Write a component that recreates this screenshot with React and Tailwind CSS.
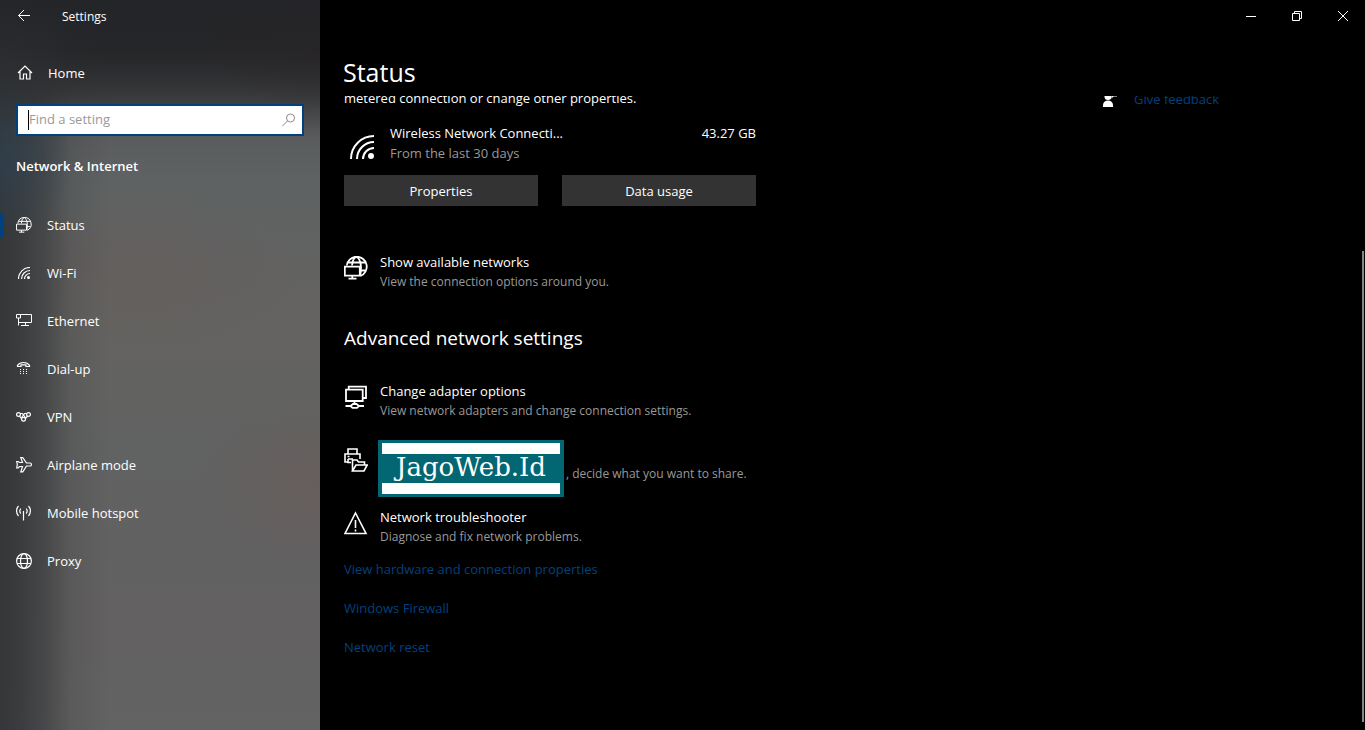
import React, { useState } from 'react';

const Icon = ({ size = 'w-4 h-4', box = 16, stroke = 1, children }) => (
  <svg
    className={`${size} shrink-0`}
    viewBox={`0 0 ${box} ${box}`}
    fill="none"
    stroke="currentColor"
    strokeWidth={stroke}
    aria-hidden="true"
  >
    {children}
  </svg>
);

// Globe with a monitor in front, used small in the nav and large in the page
const StatusIcon = ({ size, stroke = 1.5 }) => (
  <Icon size={size} box={24} stroke={stroke}>
    <path d="M2.800 9.500A10 10 0 1 1 16.500 20" />
    <path d="M8 9.500C8.600 4.500 10.400 1 12.400 1s4.400 4.500 4.600 10c0 3-.1 5-.7 8.500" />
    <path d="M3.800 6.500h17.200M16.500 14.500h5.200" />
    <path d="M.8 10.700h15v9H.8z" />
    <path d="M8.300 19.700v3M4.500 22.700h8" />
  </Icon>
);

const WifiIcon = ({ size, stroke = 2 }) => (
  <Icon size={size} box={24} stroke={stroke}>
    <path d="M1 24A23 23 0 0 1 24 1M7 24A17 17 0 0 1 24 7M13 24A11 11 0 0 1 24 13" />
    <circle cx="21" cy="21" r="3" fill="currentColor" stroke="none" />
  </Icon>
);

const EthernetIcon = () => (
  <Icon>
    <path d="M4.500 1.500h11v8h-13M.5 1.500h4v3.500h-4zM2.500 5v7.500M9.500 9.500v3M5 12.500h8" />
  </Icon>
);

const DialUpIcon = () => (
  <Icon>
    <path
      strokeWidth="1.2"
      d="M1.500 5.500V4.300C3 2.200 5.200 1.500 7.500 1.500s4.500.7 6 2.800v1.200h-3.500V3.900H5v1.600z"
    />
    <path d="M4 8.500h1M7 8.500h1M10 8.500h1M4 10.500h1M7 10.500h1M10 10.500h1M4 12.500h1M7 12.500h1M10 12.500h1" />
  </Icon>
);

const VpnIcon = () => (
  <Icon stroke={1.2}>
    <circle cx="2.500" cy="5.500" r="1.900" />
    <circle cx="12.500" cy="5.500" r="1.900" />
    <circle cx="7.500" cy="10.300" r="1.900" />
    <path d="M4.400 4.500h2l3 4M3.500 7.200l2 2.300M10.600 4.500h-2l-3 4M11.500 7.200l-2 2.300" />
  </Icon>
);

const AirplaneIcon = () => (
  <Icon stroke={1.2}>
    <path d="M6.500 5.500L4.800.7h2L10.500 6h3.800c1.500 0 1.500 3 0 3h-3.800L6.800 14.800h-2L6.500 9.500H3.500L2.200 11H.7l.6-3.500L.7 4.500h1.500l1.300 1z" />
  </Icon>
);

const HotspotIcon = () => (
  <Icon stroke={1.2}>
    <path d="M7.500 6v9.500M4.800 3.500a4 4 0 0 0 0 5M10.200 3.500a4 4 0 0 1 0 5M2.500 1a7.500 7.500 0 0 0 0 10M12.500 1a7.500 7.500 0 0 1 0 10" />
  </Icon>
);

const ProxyIcon = () => (
  <Icon stroke={1.2}>
    <circle cx="8" cy="8" r="7.400" />
    <ellipse cx="8" cy="8" rx="3.500" ry="7.400" />
    <path d="M1.300 5.500h13.400M1.300 10.500h13.400" />
  </Icon>
);

const AdapterIcon = () => (
  <Icon size="w-6 h-6" box={24} stroke={1.8}>
    <path d="M4.700 5V1.700H22V13h-3.500" />
    <path d="M2 4.700h16.700V16H2zM10.500 16v3M1.500 21h5.500M14.500 21h5.500" />
    <path d="M6.500 21l2.500-2h3.500l2.500 2-2 1.800H8.500z" />
  </Icon>
);

const SharingIcon = () => (
  <Icon size="w-6 h-6" box={24} stroke={1.6}>
    <path d="M4 6V1h9v5" />
    <path d="M7 14.500H4V11M4 14H1V6h15v5M3.500 8.500h2M4 11h5" />
    <path d="M8.500 23V12h4.500l1.500 2h6v3M8.500 23l3.500-6h11.200L20 23z" />
  </Icon>
);

const WarningIcon = () => (
  <Icon size="w-6 h-6" box={24} stroke={1.6}>
    <path d="M11.500 2L22 22.500H1z" />
    <path d="M11.500 9v8M11.500 18.500v2" />
  </Icon>
);

const FeedbackIcon = () => (
  <Icon>
    <circle cx="6" cy="5.500" r="3.500" fill="currentColor" stroke="none" />
    <path d="M1 16v-2a5 4.500 0 0 1 10 0v2z" fill="currentColor" stroke="none" />
    <path d="M9 0h6v5.600h-3.500L9.500 7.500V5z" fill="currentColor" stroke="none" />
  </Icon>
);

const navItems = [
  { id: 'status', label: 'Status', icon: <StatusIcon /> },
  { id: 'wifi', label: 'Wi-Fi', icon: <span className="w-4 flex justify-center"><WifiIcon size="w-3 h-3" stroke={2.4} /></span> },
  { id: 'ethernet', label: 'Ethernet', icon: <EthernetIcon /> },
  { id: 'dialup', label: 'Dial-up', icon: <DialUpIcon /> },
  { id: 'vpn', label: 'VPN', icon: <VpnIcon /> },
  { id: 'airplane', label: 'Airplane mode', icon: <AirplaneIcon /> },
  { id: 'hotspot', label: 'Mobile hotspot', icon: <HotspotIcon /> },
  { id: 'proxy', label: 'Proxy', icon: <ProxyIcon /> },
];

const links = ['View hardware and connection properties', 'Windows Firewall', 'Network reset'];

const Sidebar = () => {
  const [active, setActive] = useState('status');
  const [query, setQuery] = useState('');

  return (
    <aside className="w-80 shrink-0 flex flex-col bg-[linear-gradient(to_bottom,#242528_0px,#24252800_130px),radial-gradient(ellipse_70px_80px_at_0px_160px,#2d435699_0%,#2d435600_100%),radial-gradient(ellipse_120px_90px_at_320px_20px,#2e202499_0%,#2e202400_100%),linear-gradient(to_right,#343638_0px,#343638dd_20px,#34363899_45px,#34363830_70px,#34363800_110px),radial-gradient(ellipse_120px_80px_at_320px_480px,#6b5a5680_0%,#6b5a5600_100%),radial-gradient(ellipse_160px_80px_at_140px_270px,#655c5980_0%,#655c5900_100%),linear-gradient(to_bottom,#242426_0px,#28282a_50px,#424345_100px,#5a5c5d_140px,#5f6263_180px,#646361_320px,#616262_450px,#636161_600px,#636363_100%)]">
      <div className="flex items-center h-8">
        <button type="button" aria-label="Back" className="w-12 h-8 flex items-center justify-center">
          <Icon>
            <path d="M14 7.500H2.500M8 2L2.500 7.500L8 13" />
          </Icon>
        </button>
        <span className="pl-3.5 pt-0.5 text-[12px] leading-4">Settings</span>
      </div>

      <a href="#home" className="mt-[25px] h-8 px-[17px] flex items-center gap-[15px] text-[13px]">
        <Icon>
          <path strokeWidth="1.2" d="M1 8L8 1L15 8M3 6.500v7.500h3.500V9h3v5H13V6.500" />
        </Icon>
        <span className="pt-0.5">Home</span>
      </a>

      <div className="mt-[15px] mx-4 h-8 flex items-center border-2 border-[#00417f] bg-white pl-2.5 pr-1.5">
        <span className="w-px h-5 bg-black" />
        <input
          type="text"
          aria-label="Find a setting"
          placeholder="Find a setting"
          value={query}
          onChange={(e) => setQuery(e.target.value)}
          className="flex-1 min-w-0 pb-0.5 text-[13px] leading-5 text-black placeholder:text-[#999999] outline-none"
        />
        <span className="text-[#8a8a8a]">
          <Icon>
            <circle cx="10.500" cy="6" r="4" />
            <path d="M7.500 9L2.500 14" />
          </Icon>
        </span>
      </div>

      <h2 className="mt-5 px-4 text-[13px] leading-5 font-semibold">Network &amp; Internet</h2>

      <nav className="mt-[25px] flex flex-col">
        {navItems.map((item) => (
          <button
            key={item.id}
            type="button"
            onClick={() => setActive(item.id)}
            className="h-12 flex items-center text-[13px] leading-5"
          >
            <span className={`w-1 h-6 mr-3 ${active === item.id ? 'bg-[#00417f]' : ''}`} />
            {item.icon}
            <span className="pl-[15px]">{item.label}</span>
          </button>
        ))}
      </nav>
    </aside>
  );
};

const OptionRow = ({ icon, title, text }) => (
  <div className="flex gap-3">
    <span className="w-6 pt-1">{icon}</span>
    <div className="whitespace-nowrap">
      <h3 className="text-[13px] leading-5">{title}</h3>
      <p className="text-[12px] leading-5 text-[#999999]">{text}</p>
    </div>
  </div>
);

const SharingRow = () => (
  <div className="flex h-10">
    <span className="w-[34px] pt-1">
      <SharingIcon />
    </span>
    <div className="-mt-1 w-[186px] h-[57px] shrink-0 border-x-4 border-y-3 border-[#026673] bg-[#026673] flex flex-col">
      <span className="h-[11px] bg-white" />
      <span className="flex-1 flex items-center justify-center pb-1 font-['DejaVu_Serif',serif] text-[26px] leading-6">
        JagoWeb.Id
      </span>
      <span className="h-[11px] bg-white" />
    </div>
    <p className="mt-5 pl-0.5 text-[12px] leading-5 text-[#999999] whitespace-nowrap">
      , decide what you want to share.
    </p>
  </div>
);

const WindowControls = () => (
  <div className="flex justify-end h-8">
    <button type="button" aria-label="Minimize" className="w-[46px] flex items-center justify-center">
      <Icon>
        <path d="M4 8.500h10" />
      </Icon>
    </button>
    <button type="button" aria-label="Restore" className="w-[46px] flex items-center justify-center">
      <Icon>
        <path d="M4.500 5.500h7v7h-7zM6.500 5.500v-2h7v7h-2" />
      </Icon>
    </button>
    <button type="button" aria-label="Close" className="w-[46px] flex items-center justify-center">
      <Icon>
        <path d="M4 3l10 10M14 3L4 13" />
      </Icon>
    </button>
  </div>
);

const StatusPage = () => (
  <main className="flex-1 min-w-0 flex flex-col bg-black">
    <WindowControls />
    <h1 className="mt-6 h-10 pl-[23px] text-[25px] leading-8">Status</h1>

    <div className="flex-1 min-h-0 flex overflow-hidden">
      <div className="flex-1 flex justify-between pl-6 -mt-2">
        <div className="w-[412px]">
          <p className="text-[13px] leading-5 whitespace-nowrap">metered connection or change other properties.</p>

          <div className="mt-[15px] flex">
            <span className="w-[46px] pt-3 pl-1.5">
              <WifiIcon size="w-6 h-6" />
            </span>
            <div className="flex-1 text-[13px] leading-5">
              <div className="flex justify-between">
                <span>Wireless Network Connecti...</span>
                <span>43.27 GB</span>
              </div>
              <p className="text-[#999999]">From the last 30 days</p>
            </div>
          </div>

          <div className="mt-3 grid grid-cols-2 gap-6 text-[13px]">
            <button type="button" className="h-[31px] pt-0.5 bg-[#333333]">Properties</button>
            <button type="button" className="h-[31px] pt-0.5 bg-[#333333]">Data usage</button>
          </div>

          <div className="mt-[46px]">
            <OptionRow
              icon={<StatusIcon size="w-6 h-6" stroke={1.8} />}
              title="Show available networks"
              text="View the connection options around you."
            />
          </div>

          <h2 className="mt-8 text-[19px] leading-7">Advanced network settings</h2>

          <div className="mt-[29px] flex flex-col gap-[23px]">
            <OptionRow
              icon={<AdapterIcon />}
              title="Change adapter options"
              text="View network adapters and change connection settings."
            />
            <SharingRow />
            <OptionRow
              icon={<WarningIcon />}
              title="Network troubleshooter"
              text="Diagnose and fix network problems."
            />
          </div>

          <div className="mt-3 flex flex-col items-start gap-[19px]">
            {links.map((label) => (
              <a key={label} href="#more" className="text-[13px] leading-5 text-[#00417f]">
                {label}
              </a>
            ))}
          </div>
        </div>

        <a href="#feedback" className="w-[260px] h-[22px] flex items-center gap-4">
          <FeedbackIcon />
          <span className="text-[13px] leading-5 text-[#00417f]">Give feedback</span>
        </a>
      </div>

      {/* Scrollbar thumb */}
      <div className="flex flex-col pt-[155px] pb-2 pr-px">
        <span className="flex-1 w-0.5 bg-[#858585]" />
      </div>
    </div>
  </main>
);

const App = () => (
  <div className="h-screen flex overflow-hidden text-white font-['Open_Sans','Noto_Sans',sans-serif]">
    <Sidebar />
    <StatusPage />
  </div>
);

export default App;
